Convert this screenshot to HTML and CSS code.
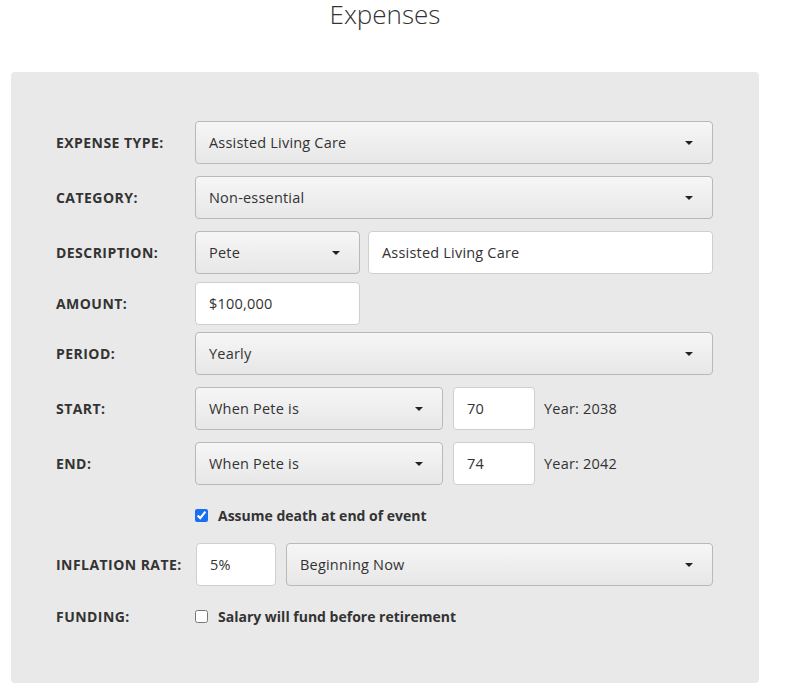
FILE: index.html
```html
<!DOCTYPE html>
<html>
<head>
<meta charset="utf-8">
<link rel="stylesheet" href="styles.css">
</head>
<body>
<h1 class="title">Expenses</h1>
<div class="panel">
  <div class="row r-gap12">
    <div class="label">EXPENSE TYPE:</div>
    <div class="controls">
      <div class="select grow"><span class="val">Assisted Living Care</span><span class="caret"></span></div>
    </div>
  </div>
  <div class="row r-gap12">
    <div class="label">CATEGORY:</div>
    <div class="controls">
      <div class="select grow"><span class="val">Non-essential</span><span class="caret"></span></div>
    </div>
  </div>
  <div class="row r-gap8">
    <div class="label">DESCRIPTION:</div>
    <div class="controls gap8">
      <div class="select w165"><span class="val">Pete</span><span class="caret"></span></div>
      <div class="input grow">Assisted Living Care</div>
    </div>
  </div>
  <div class="row r-gap7">
    <div class="label">AMOUNT:</div>
    <div class="controls">
      <div class="input w165">$100,000</div>
    </div>
  </div>
  <div class="row r-gap12">
    <div class="label">PERIOD:</div>
    <div class="controls">
      <div class="select grow"><span class="val">Yearly</span><span class="caret"></span></div>
    </div>
  </div>
  <div class="row r-gap12">
    <div class="label">START:</div>
    <div class="controls gap10">
      <div class="select w248"><span class="val">When Pete is</span><span class="caret"></span></div>
      <div class="input w82">70</div>
      <div class="year">Year: 2038</div>
    </div>
  </div>
  <div class="row r-gap-cb">
    <div class="label">END:</div>
    <div class="controls gap10">
      <div class="select w248"><span class="val">When Pete is</span><span class="caret"></span></div>
      <div class="input w82">74</div>
      <div class="year">Year: 2042</div>
    </div>
  </div>
  <div class="row check-row r-gap18">
    <div class="label"></div>
    <label class="check"><input type="checkbox" checked> <span>Assume death at end of event</span></label>
  </div>
  <div class="row r-gap-fund">
    <div class="label">INFLATION RATE:</div>
    <div class="controls gap10">
      <div class="input w80">5%</div>
      <div class="select grow"><span class="val">Beginning Now</span><span class="caret"></span></div>
    </div>
  </div>
  <div class="row check-row">
    <div class="label">FUNDING:</div>
    <label class="check"><input type="checkbox"> <span>Salary will fund before retirement</span></label>
  </div>
</div>
</body>
</html>
```
FILE: styles.css
```css
html, body {
  margin: 0;
  padding: 0;
  background: #fff;
}
body {
  font-family: "Open Sans", Lato, Arial, sans-serif;
  color: #333;
  width: 789px;
  height: 696px;
  overflow: hidden;
}
.title {
  margin: 0;
  padding-top: 1px;
  height: 71px;
  box-sizing: border-box;
  text-align: center;
  font-weight: 300;
  font-size: 26px;
  line-height: 26px;
  color: #333;
  width: 770px;
}
.panel {
  margin-left: 11px;
  width: 748px;
  height: 611px;
  box-sizing: border-box;
  background: #e9e9e9;
  border-radius: 4px;
  padding: 49px 46px 0 45px;
}
.title + .panel { margin-top: 1px; }
.row {
  display: flex;
  align-items: center;
  height: 43px;
}
.r-gap12 { margin-bottom: 12px; }
.r-gap8 { margin-bottom: 8px; }
.r-gap7 { margin-bottom: 7px; }
.r-gap18 { margin-bottom: 18px; }
.r-gap-cb { margin-bottom: 20px; }
.r-gap-fund { margin-bottom: 20px; }
.check-row { height: 20px; }
.label {
  width: 139px;
  flex: none;
  font-weight: 700;
  font-size: 14px;
  letter-spacing: 0.45px;
  color: #333;
}
.controls {
  flex: 1;
  display: flex;
  align-items: center;
  height: 43px;
}
.gap8 { gap: 8px; }
.gap10 { gap: 10px; }
.select, .input {
  box-sizing: border-box;
  height: 43px;
  border-radius: 4px;
  display: flex;
  align-items: center;
  padding-left: 13px;
  font-size: 14.5px;
  letter-spacing: 0.2px;
  color: #333;
  flex: none;
}
.select {
  border: 1px solid #b9b9b9;
  background: linear-gradient(#f6f6f6, #e7e7e7);
  padding-right: 19px;
  justify-content: space-between;
}
.input {
  border: 1px solid #cfcfcf;
  background: #fff;
}
.grow { flex: 1; }
.w165 { width: 165px; }
.w248 { width: 248px; }
.w82 { width: 82px; }
.w80 { width: 80px; margin-left: 1px; }
.caret {
  width: 0;
  height: 0;
  border-left: 4px solid transparent;
  border-right: 4px solid transparent;
  border-top: 4px solid #222;
}
.year {
  font-size: 14.5px;
  letter-spacing: 0.2px;
  color: #333;
  margin-left: -1px;
}
.check {
  display: flex;
  align-items: center;
  font-weight: 700;
  font-size: 14px;
  color: #333;
}
.check input {
  margin: 0 10px 0 0;
  width: 13px;
  height: 13px;
  accent-color: #1a6ff0;
}
```
